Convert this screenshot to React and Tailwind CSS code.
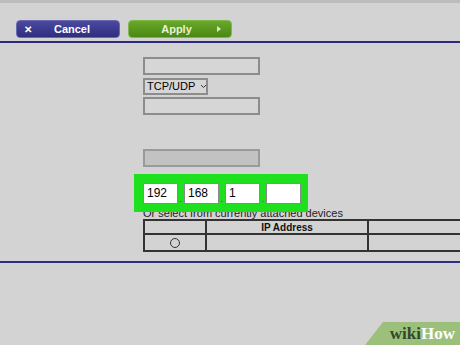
export default function App() {
  const cellInput = "h-[21px] w-[35px] bg-white border border-[#8a8a8a] text-[12px] leading-[19px] pl-[3px] text-black";

  return (
    <div className="w-[460px] h-[345px] bg-[#d3d3d3] relative overflow-hidden font-['Liberation_Sans',Arial,sans-serif]">
      {/* top strip */}
      <div className="h-[3px] bg-[#bcbcbc]" />

      {/* action buttons */}
      <div className="flex gap-[8px] pl-[16px] pt-[17px]">
        <div className="w-[104px] h-[18px] rounded-[4px] bg-gradient-to-b from-[#4b4aa0] to-[#2f2d7e] border border-[#6a6ab0] flex items-center text-white text-[11px] font-bold">
          <span className="w-[22px] text-center text-[10px]">✕</span>
          <span className="flex-1 text-center pr-[14px]">Cancel</span>
        </div>
        <div className="w-[104px] h-[18px] rounded-[4px] bg-gradient-to-b from-[#69a82a] to-[#4a8812] border border-[#7eb84a] flex items-center text-[#e6f2d8] text-[11px] font-bold">
          <span className="flex-1 text-center pl-[8px]">Apply</span>
          <svg width="6" height="6" viewBox="0 0 6 6" className="mr-[9px]">
            <polygon points="1,0 5,3 1,6" fill="#d8ecc4" />
          </svg>
        </div>
      </div>

      <div className="mt-[3px] h-[2px] bg-[#2b2a7e]" />

      {/* form column */}
      <div className="pl-[143px] pt-[14px] flex flex-col">
        <div className="w-[117px] h-[18px] border-2 border-[#8c8c8c] bg-[#d6d6d6]" />
        <div className="mt-[3px] w-[65px] h-[17px] border-2 border-[#8c8c8c] bg-[#d6d6d6] flex items-center text-[11px] text-black pl-[2px]">
          <span>TCP/UDP</span>
          <svg width="7" height="5" viewBox="0 0 7 5" className="ml-[5px] shrink-0">
            <polyline points="1,1 3.5,3.5 6,1" fill="none" stroke="#333" strokeWidth="1" />
          </svg>
        </div>
        <div className="mt-[2px] w-[117px] h-[18px] border-2 border-[#8c8c8c] bg-[#d6d6d6]" />
        <div className="mt-[34px] w-[117px] h-[18px] border-2 border-[#9a9a9a] bg-[#c2c2c2]" />

        {/* highlighted IP fields */}
        <div className="relative z-10 mt-[7px] -ml-[9px] w-[174px] h-[38px] bg-[#1fe01f] flex items-center pl-[9px]">
          <div className="flex items-end">
            <div className={cellInput}>192</div>
            <span className="w-[6px] text-center text-[10px] leading-[10px] text-[#555]">.</span>
            <div className={cellInput}>168</div>
            <span className="w-[6px] text-center text-[10px] leading-[10px] text-[#555]">.</span>
            <div className={cellInput}>1</div>
            <span className="w-[6px] text-center text-[10px] leading-[10px] text-[#555]">.</span>
            <div className={cellInput}></div>
          </div>
        </div>

        <div className="-mt-[5px] text-[11px] leading-[12px] text-[#222]">
          Or select from currently attached devices
        </div>

        {/* devices table */}
        <div className="w-[330px] border-2 border-[#333] border-r-0">
          <div className="flex h-[14px] border-b-2 border-[#333]">
            <div className="w-[62px] border-r-2 border-[#333]" />
            <div className="w-[162px] border-r-2 border-[#333] flex items-center justify-center text-[10px] font-bold text-[#111]">
              IP Address
            </div>
            <div className="flex-1" />
          </div>
          <div className="flex h-[15px]">
            <div className="w-[62px] border-r-2 border-[#333] flex items-center justify-center">
              <div className="w-[10px] h-[10px] rounded-full border border-[#333]" />
            </div>
            <div className="w-[162px] border-r-2 border-[#333]" />
            <div className="flex-1" />
          </div>
        </div>
      </div>

      <div className="mt-[9px] h-[2px] bg-[#2f2d86]" />

      {/* wikiHow watermark */}
      <div className="absolute right-0 bottom-0 w-[95px] h-[23px] bg-[#9cc07c] [clip-path:polygon(18px_0,100%_0,100%_100%,0_100%)] flex items-center justify-end pr-[5px]">
        <span className="font-['Liberation_Serif',serif] font-bold text-[17px] leading-[16px] text-[#34472b]">wiki</span>
        <span className="font-['Liberation_Serif',serif] font-bold text-[17px] leading-[16px] text-white">How</span>
      </div>
    </div>
  );
}
